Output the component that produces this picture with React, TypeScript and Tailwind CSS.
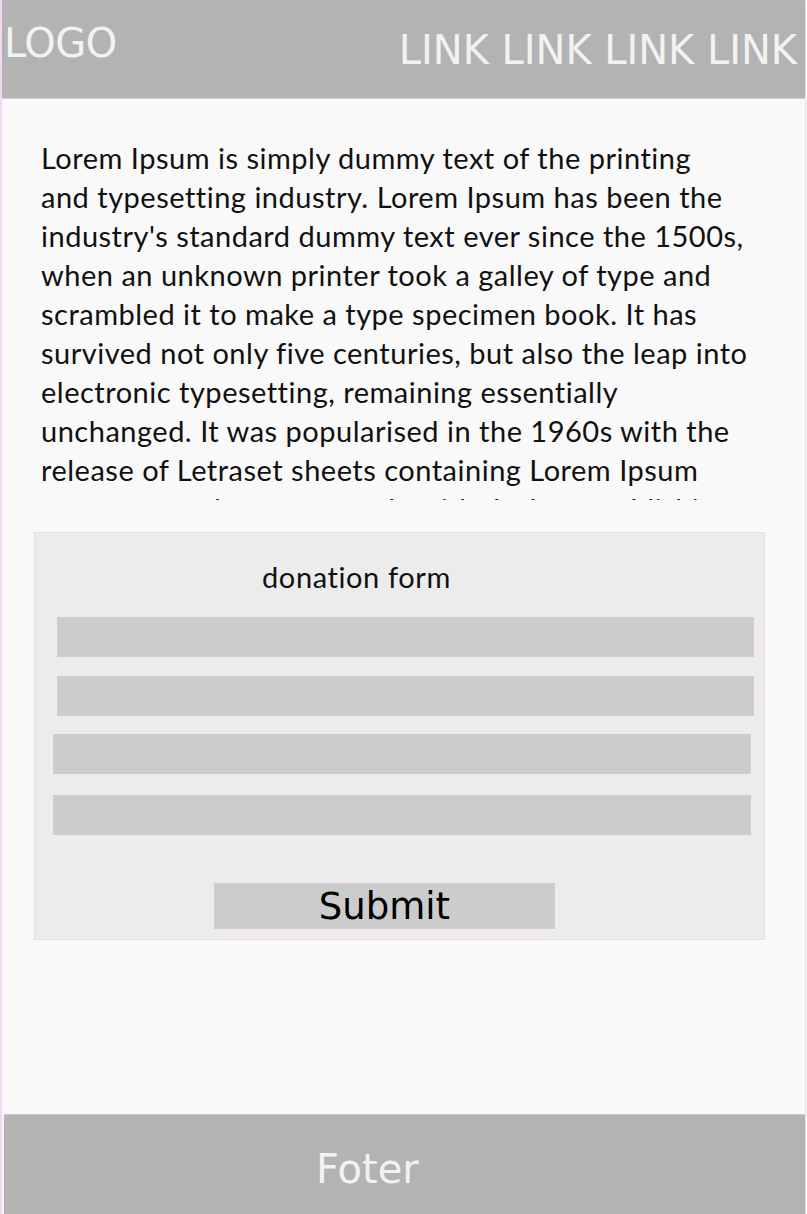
import React from "react";

const lines = [
  "Lorem Ipsum is simply dummy text of the printing",
  "and typesetting industry. Lorem Ipsum has been the",
  "industry's standard dummy text ever since the 1500s,",
  "when an unknown printer took a galley of type and",
  "scrambled it to make a type specimen book. It has",
  "survived not only five centuries, but also the leap into",
  "electronic typesetting, remaining essentially",
  "unchanged. It was popularised in the 1960s with the",
  "release of Letraset sheets containing Lorem Ipsum",
  "passages, and more recently with desktop publishing",
  "software like Aldus PageMaker including versions of Lorem Ipsum.",
];

export default function App() {
  return (
    <div className="w-[807px] h-[1214px] overflow-hidden bg-[#f9f9f9] flex flex-col">
      <div className="w-[806px] h-[1214px] border-l-2 border-r border-[#f2d8f2] flex flex-col">
        <header
          className="h-[99px] bg-[#b3b3b3] border-t border-b border-t-[#c6aec6] border-b-[#e2c4e2] flex justify-between text-[#f2f2f2] text-[40px] leading-[46px] pr-[8px] pl-[2px]"
          style={{ fontFamily: '"DejaVu Sans", sans-serif' }}
        >
          <div className="pt-[19px] tracking-[-0.5px]">LOGO</div>
          <div className="pt-[26px] tracking-[-0.05px]">LINK LINK LINK LINK</div>
        </header>

        <main className="flex-1 flex flex-col" style={{ fontFamily: 'Lato, "Liberation Sans", sans-serif' }}>
          <div className="mt-[39px] ml-[39px] h-[362px] overflow-hidden text-[29px] leading-[39px] tracking-[0.5px] text-[#111]">
            {lines.map((l, i) => (
              <div key={i} className="whitespace-nowrap">{l}</div>
            ))}
          </div>

          <section className="mt-[32px] ml-[32px] w-[731px] h-[408px] bg-[#ececec] border border-[#f0d6f0] flex flex-col pt-[25px]">
            <div className="pl-[227px] text-[29px] leading-[37px] tracking-[0.6px] text-[#111]">donation form</div>
            <div className="mt-[22px] ml-[22px] w-[697px] h-[40px] bg-[#cccccc] border border-[#dcc2dc]" />
            <div className="mt-[19px] ml-[22px] w-[697px] h-[40px] bg-[#cccccc] border border-[#dcc2dc]" />
            <div className="mt-[18px] ml-[18px] w-[698px] h-[40px] bg-[#cccccc] border border-[#dcc2dc]" />
            <div className="mt-[21px] ml-[18px] w-[698px] h-[40px] bg-[#cccccc] border border-[#dcc2dc]" />
            <button
              className="mt-[48px] ml-[179px] w-[341px] h-[46px] bg-[#cccccc] border border-[#dcc2dc] flex items-center justify-center text-[37px] text-black leading-none"
              style={{ fontFamily: '"DejaVu Sans", sans-serif' }}
            >
              Submit
            </button>
          </section>
        </main>

        <footer
          className="h-[100px] ml-[2px] bg-[#b3b3b3] border-t border-[#dcc2dc] text-[#f2f2f2] text-[40px] leading-[46px] pl-[312px] pt-[31px]"
          style={{ fontFamily: '"DejaVu Sans", sans-serif' }}
        >
          Foter
        </footer>
      </div>
    </div>
  );
}
